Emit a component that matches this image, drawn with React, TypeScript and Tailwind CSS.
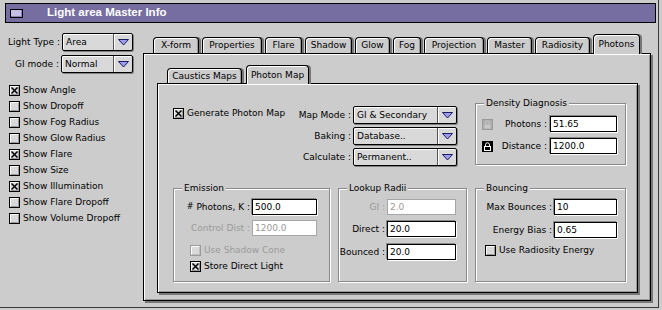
import React from 'react';

type CbProps = { label: string; checked?: boolean; disabled?: boolean };

const CheckBox = ({ label, checked = false, disabled = false }: CbProps) => (
  <div className="flex h-[16px] items-center">
    <svg width="11" height="11" viewBox="0 0 11 11" className="shrink-0">
      <rect x="0.5" y="0.5" width="10" height="10" fill="#d9d9d9" stroke={disabled ? '#9a9a9a' : '#000'} />
      <path d="M1.5 9V1.5H9" fill="none" stroke="#fff" />
      <path d="M2 9.5H9.5V2" fill="none" stroke={disabled ? '#bdbdbd' : '#9a9a9a'} />
      {checked && <path d="M2.5 2.5L8.5 8.5M8.5 2.5L2.5 8.5" stroke="#000" strokeWidth="1.5" />}
    </svg>
    <span className={`ml-[3px] whitespace-nowrap ${disabled ? 'text-[#9a9a9a]' : 'text-black'}`}>{label}</span>
  </div>
);

const Popup = ({ value, w }: { value: string; w: string }) => (
  <div className={`${w} flex h-[18px] rounded-[2px] border border-black bg-[#d9d9d9] shadow-[inset_1px_1px_0_#fff,1px_1px_0_#808080]`}>
    <div className="flex flex-1 items-center border-r border-[#555] pl-[3px] whitespace-nowrap">{value}</div>
    <div className="flex w-[18px] items-center justify-center shadow-[inset_1px_0_0_#fff]">
      <svg width="11" height="7" viewBox="0 0 11 7">
        <path d="M0.5 0.5H10.5L5.5 6Z" fill="#9c9cf2" stroke="#1c1c5c" />
      </svg>
    </div>
  </div>
);

const Field = ({ value, w, disabled = false }: { value: string; w: string; disabled?: boolean }) => (
  <div
    className={`${w} flex h-[16px] items-center bg-white pl-[2px] ${
      disabled
        ? 'border border-[#a6a6a6] text-[#9a9a9a]'
        : 'border border-black text-black shadow-[-1px_-1px_0_#8a8a8a,1px_1px_0_#fff]'
    }`}
  >
    {value}
  </div>
);

const Group = ({ title, className, children }: { title: string; className: string; children?: React.ReactNode }) => (
  <div className={`relative border border-[#8a8a8a] shadow-[inset_1px_1px_0_#fff,1px_1px_0_#fff] ${className}`}>
    <span className="absolute left-[8px] top-[-7px] bg-[#cccccc] px-[2px] leading-[12px] whitespace-nowrap">{title}</span>
    {children}
  </div>
);

const Tab = ({ label, w, h, active = false }: { label: string; w: string; h: string; active?: boolean }) => (
  <div
    className={`${w} ${h} flex shrink-0 items-center justify-center rounded-t-[4px] border-x border-t border-black bg-[#cccccc] whitespace-nowrap ${
      active
        ? 'relative z-10 -mb-px shadow-[inset_1px_1px_0_#fff,2px_0_0_#777]'
        : 'shadow-[inset_1px_1px_0_#fff,inset_-1px_0_0_#9a9a9a,2px_0_0_#777]'
    }`}
  >
    {label}
  </div>
);

const Lock = ({ on }: { on: boolean }) => (
  <svg width="11" height="11" viewBox="0 0 11 11" className="shrink-0">
    {on ? (
      <>
        <rect x="0" y="0" width="11" height="11" fill="#000" />
        <path d="M3.5 5.5V3.8a2 2 0 0 1 4 0V5.5" fill="none" stroke="#fff" />
        <rect x="2.5" y="5.5" width="6" height="4" fill="#000" stroke="#fff" />
      </>
    ) : (
      <>
        <rect x="0.5" y="0.5" width="10" height="10" fill="#adadad" stroke="#9a9a9a" />
        <path d="M3.5 5.5V3.8a2 2 0 0 1 4 0V5.5" fill="none" stroke="#c8c8c8" />
        <rect x="2.5" y="5.5" width="6" height="4" fill="#c8c8c8" />
      </>
    )}
  </svg>
);

const outerTabs: [string, string][] = [
  ['X-form', 'w-[46px]'],
  ['Properties', 'w-[60px]'],
  ['Flare', 'w-[37px]'],
  ['Shadow', 'w-[47px]'],
  ['Glow', 'w-[35px]'],
  ['Fog', 'w-[28px]'],
  ['Projection', 'w-[60px]'],
  ['Master', 'w-[45px]'],
  ['Radiosity', 'w-[55px]'],
  ['Photons', 'w-[47px]'],
];

const showItems: [string, boolean][] = [
  ['Show Angle', true],
  ['Show Dropoff', false],
  ['Show Fog Radius', false],
  ['Show Glow Radius', false],
  ['Show Flare', true],
  ['Show Size', false],
  ['Show Illumination', true],
  ['Show Flare Dropoff', false],
  ['Show Volume Dropoff', false],
];

export default function App() {
  return (
    <div className="h-[310px] w-[662px] overflow-hidden bg-[#cccccc] font-['DejaVu_Sans',sans-serif] text-[9px] leading-none text-black">
      <div className="flex h-[308px] w-[659px] flex-col border-b border-r border-[#3a3a3a]">
        {/* title bar */}
        <div className="ml-[5px] mt-[3px] flex h-[20px] w-[651px] shrink-0 items-center border border-black bg-[#766ea0]">
          <div className="ml-[4px] h-[9px] w-[13px] border border-black bg-[#c6c0e6] shadow-[inset_-1px_-1px_0_#8a82b8]" />
          <span className="ml-[24px] font-['Liberation_Sans',sans-serif] text-[11.5px] font-bold text-white">
            Light area Master Info
          </span>
        </div>

        <div className="flex flex-1">
          {/* left column */}
          <div className="w-[143px] shrink-0 pt-[10px]">
            <div className="flex h-[18px] items-center">
              <span className="w-[60px] text-right whitespace-nowrap">Light Type :</span>
              <div className="ml-[2px]">
                <Popup value="Area" w="w-[71px]" />
              </div>
            </div>
            <div className="mt-[4px] flex h-[18px] items-center">
              <span className="w-[59px] text-right whitespace-nowrap">GI mode :</span>
              <div className="ml-[2px]">
                <Popup value="Normal" w="w-[72px]" />
              </div>
            </div>
            <div className="mt-[9px] pl-[9px]">
              {showItems.map(([label, checked]) => (
                <CheckBox key={label} label={label} checked={checked} />
              ))}
            </div>
          </div>

          {/* tab area */}
          <div className="pt-[11px]">
            <div className="flex h-[19px] items-end gap-[3px] pl-[10px]">
              {outerTabs.map(([label, w]) => (
                <Tab key={label} label={label} w={w} h={label === 'Photons' ? 'h-[20px]' : 'h-[16px]'} active={label === 'Photons'} />
              ))}
            </div>
            <div className="h-[248px] w-[508px] border border-black pl-[13px] pt-[11px] shadow-[inset_1px_1px_0_#fff,inset_-1px_-1px_0_#9a9a9a,2px_2px_0_#777]">
              <div className="flex h-[18px] items-end gap-[4px] pl-[10px]">
                <Tab label="Caustics Maps" w="w-[75px]" h="h-[15px]" />
                <Tab label="Photon Map" w="w-[63px]" h="h-[19px]" active />
              </div>
              <div className="h-[210px] w-[481px] border border-black pl-[15px] pt-[19px] shadow-[inset_1px_1px_0_#fff,inset_-1px_-1px_0_#9a9a9a,2px_2px_0_#777]">
                {/* top section */}
                <div className="flex">
                  <div className="flex w-[294px]">
                    <div className="w-[117px] pt-[2px]">
                      <CheckBox label="Generate Photon Map" checked />
                    </div>
                    <div className="flex flex-col gap-[3px] pt-[3px]">
                      {[
                        ['Map Mode :', 'GI & Secondary'],
                        ['Baking :', 'Database..'],
                        ['Calculate :', 'Permanent..'],
                      ].map(([label, value]) => (
                        <div key={label} className="flex h-[18px] items-center">
                          <span className="w-[61px] text-right whitespace-nowrap">{label}</span>
                          <div className="ml-[2px]">
                            <Popup value={value} w="w-[104px]" />
                          </div>
                        </div>
                      ))}
                    </div>
                  </div>
                  <Group title="Density Diagnosis" className="ml-[8px] h-[62px] w-[151px] pl-[6px] pt-[12px]">
                    <div className="flex h-[16px] items-center">
                      <Lock on={false} />
                      <span className="w-[54px] text-right whitespace-nowrap">Photons :</span>
                      <div className="ml-[3px]">
                        <Field value="51.65" w="w-[67px]" />
                      </div>
                    </div>
                    <div className="mt-[6px] flex h-[16px] items-center">
                      <Lock on />
                      <span className="w-[54px] text-right whitespace-nowrap">Distance :</span>
                      <div className="ml-[3px]">
                        <Field value="1200.0" w="w-[67px]" />
                      </div>
                    </div>
                  </Group>
                </div>

                {/* bottom section */}
                <div className="mt-[22px] flex gap-[8px]">
                  <Group title="Emission" className="h-[94px] w-[157px] pt-[10px]">
                    <div className="flex h-[16px] items-center">
                      <span className="w-[76px] text-right whitespace-nowrap">
                        <span className="relative top-[-1px] text-[8px]">#</span> Photons, K :
                      </span>
                      <div className="ml-[2px]">
                        <Field value="500.0" w="w-[65px]" />
                      </div>
                    </div>
                    <div className="mt-[5px] flex h-[16px] items-center">
                      <span className="w-[76px] text-right whitespace-nowrap text-[#9a9a9a]">Control Dist :</span>
                      <div className="ml-[2px]">
                        <Field value="1200.0" w="w-[65px]" disabled />
                      </div>
                    </div>
                    <div className="mt-[6px] pl-[16px]">
                      <CheckBox label="Use Shadow Cone" disabled />
                      <CheckBox label="Store Direct Light" checked />
                    </div>
                  </Group>

                  <Group title="Lookup Radii" className="h-[94px] w-[129px] pt-[10px]">
                    <div className="flex h-[16px] items-center">
                      <span className="w-[46px] text-right whitespace-nowrap text-[#9a9a9a]">GI :</span>
                      <div className="ml-[2px]">
                        <Field value="2.0" w="w-[69px]" disabled />
                      </div>
                    </div>
                    <div className="mt-[6px] flex h-[16px] items-center">
                      <span className="w-[46px] text-right whitespace-nowrap">Direct :</span>
                      <div className="ml-[2px]">
                        <Field value="20.0" w="w-[69px]" />
                      </div>
                    </div>
                    <div className="mt-[7px] flex h-[16px] items-center">
                      <span className="w-[46px] text-right whitespace-nowrap">Bounced :</span>
                      <div className="ml-[2px]">
                        <Field value="20.0" w="w-[69px]" />
                      </div>
                    </div>
                  </Group>

                  <Group title="Bouncing" className="h-[94px] w-[151px] pt-[10px]">
                    <div className="flex h-[16px] items-center">
                      <span className="w-[76px] text-right whitespace-nowrap">Max Bounces :</span>
                      <div className="ml-[2px]">
                        <Field value="10" w="w-[63px]" />
                      </div>
                    </div>
                    <div className="mt-[7px] flex h-[16px] items-center">
                      <span className="w-[76px] text-right whitespace-nowrap">Energy Bias :</span>
                      <div className="ml-[2px]">
                        <Field value="0.65" w="w-[63px]" />
                      </div>
                    </div>
                    <div className="mt-[4px] pl-[9px]">
                      <CheckBox label="Use Radiosity Energy" />
                    </div>
                  </Group>
                </div>
              </div>
            </div>
          </div>
        </div>
      </div>
    </div>
  );
}
